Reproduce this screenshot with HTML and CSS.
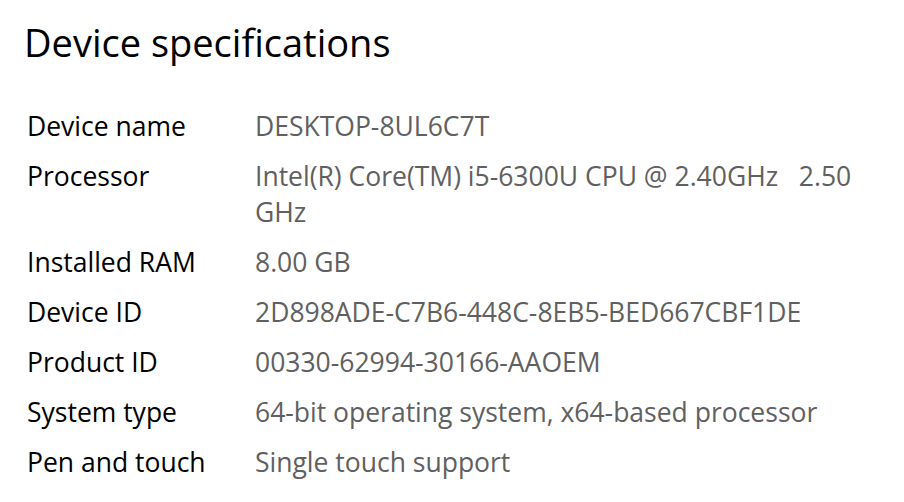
FILE: index.html
```html
<!DOCTYPE html>
<html lang="en">
<head>
<meta charset="utf-8">
<title>Device specifications</title>
<link rel="stylesheet" href="styles.css">
</head>
<body>
<main class="page">
  <h1 class="title">Device specifications</h1>
  <dl class="specs">
    <div class="row"><dt class="label">Device name</dt><dd class="value">DESKTOP-8UL6C7T</dd></div>
    <div class="row"><dt class="label">Processor</dt><dd class="value">Intel(R) Core(TM) i5-6300U CPU @ 2.40GHz&nbsp;&nbsp; 2.50 GHz</dd></div>
    <div class="row"><dt class="label">Installed RAM</dt><dd class="value">8.00 GB</dd></div>
    <div class="row"><dt class="label">Device ID</dt><dd class="value">2D898ADE-C7B6-448C-8EB5-BED667CBF1DE</dd></div>
    <div class="row"><dt class="label">Product ID</dt><dd class="value">00330-62994-30166-AAOEM</dd></div>
    <div class="row"><dt class="label">System type</dt><dd class="value">64-bit operating system, x64-based processor</dd></div>
    <div class="row"><dt class="label">Pen and touch</dt><dd class="value">Single touch support</dd></div>
  </dl>
</main>
</body>
</html>
```
FILE: styles.css
```css
html, body {
  margin: 0;
  padding: 0;
  background: #ffffff;
}
body {
  font-family: "Open Sans", "Noto Sans", sans-serif;
  color: #000000;
}
.page {
  padding: 17px 0 0 24px;
  width: 860px;
}
.title {
  margin: 0;
  font-size: 38px;
  font-weight: 400;
  line-height: 50px;
}
.specs {
  margin: 41px 0 0 3px;
  display: flex;
  flex-direction: column;
  gap: 14px;
}
.row {
  display: grid;
  grid-template-columns: 228px 1fr;
}
.label, .value {
  margin: 0;
  font-size: 26.5px;
  line-height: 36px;
}
.value {
  color: #606060;
}
```
